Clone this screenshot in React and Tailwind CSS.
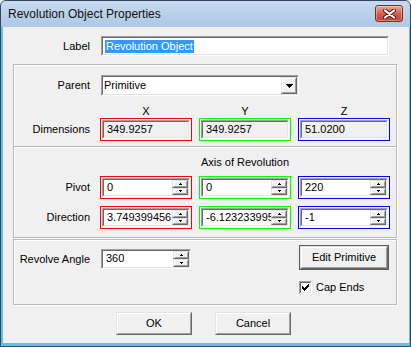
import React from "react";

const font = "font-['Liberation_Sans',Arial,sans-serif]";

function Sunken({ className = "", innerClass = "", children }) {
  return (
    <div className={"border border-t-[#a0a0a0] border-l-[#a0a0a0] border-r-white border-b-white " + className}>
      <div className={"h-full border border-t-[#696969] border-l-[#696969] border-r-[#e3e3e3] border-b-[#e3e3e3] " + innerClass}>
        {children}
      </div>
    </div>
  );
}

function Raised({ className = "", innerClass = "", children }) {
  return (
    <div className={"border border-t-[#e3e3e3] border-l-[#e3e3e3] border-r-[#696969] border-b-[#696969] bg-[#f0f0f0] " + className}>
      <div className={"h-full border border-t-white border-l-white border-r-[#a0a0a0] border-b-[#a0a0a0] " + innerClass}>
        {children}
      </div>
    </div>
  );
}

function Up() {
  return (
    <svg width="3" height="2" viewBox="0 0 3 2" shapeRendering="crispEdges">
      <rect x="1" y="0" width="1" height="1" fill="#000" />
      <rect x="0" y="1" width="3" height="1" fill="#000" />
    </svg>
  );
}
function Down() {
  return (
    <svg width="3" height="2" viewBox="0 0 3 2" shapeRendering="crispEdges">
      <rect x="0" y="0" width="3" height="1" fill="#000" />
      <rect x="1" y="1" width="1" height="1" fill="#000" />
    </svg>
  );
}

function SpinEdit({ value, className = "", w = "w-[88px]", h = "h-[19px]" }) {
  return (
    <Sunken className={w + " " + h + " bg-white " + className} innerClass="flex">
      <div className="flex-1 min-w-0 overflow-hidden whitespace-nowrap pl-[3px] text-[11px] leading-[15px] text-black">
        {value}
      </div>
      <div className="w-[16px] flex flex-col">
        <Raised className="flex-1" innerClass="flex items-center justify-center">
          <Up />
        </Raised>
        <Raised className="flex-1" innerClass="flex items-center justify-center">
          <Down />
        </Raised>
      </div>
    </Sunken>
  );
}

function Framed({ color, children }) {
  return <div className={"border p-[1px] w-[92px] h-[23px] " + color}>{children}</div>;
}

function ReadOnly({ value }) {
  return (
    <Sunken className="w-[88px] h-[19px] bg-[#f0f0f0]">
      <div className="pl-[3px] text-[11px] leading-[15px] whitespace-nowrap">{value}</div>
    </Sunken>
  );
}

function Label({ children, w = "w-[76px]" }) {
  return <div className={w + " text-right text-[11px] leading-[13px] whitespace-nowrap"}>{children}</div>;
}

const group =
  "ml-[10px] w-[384px] border border-[#b8b8b8] shadow-[inset_1px_1px_0_#ffffff,1px_1px_0_#ffffff] flex flex-col";

function Btn({ children, className = "", def = false }) {
  const inner = (
    <Raised className="w-full h-full" innerClass="flex items-center justify-center text-[11px] leading-[13px]">
      {children}
    </Raised>
  );
  if (def) {
    return <div className={"border border-[#5a5a5a] " + className}>{inner}</div>;
  }
  return <div className={className}>{inner}</div>;
}

export default function App() {
  return (
    <div className={"w-[411px] h-[347px] bg-[#f0f0f0] " + font}>
      <div className="w-[411px] h-[347px] flex flex-col border border-[#33475e] rounded-t-[6px] bg-[#6cbce8] overflow-hidden text-black">
        {/* Title bar */}
        <div className="h-[26px] flex items-start bg-linear-to-b from-[#c8daef] to-[#adc7e5]">
          <div className="ml-[7px] mt-[6px] text-[12px] leading-[14px] text-[#111] whitespace-nowrap">
            Revolution Object Properties
          </div>
          <div className="ml-auto mr-[7px] mt-[4px] w-[28px] h-[17px] rounded-[3px] border border-[#7d2a1f] bg-linear-to-b from-[#e8aa9c] via-[#d0604d] to-[#c3402f] flex items-center justify-center shadow-[inset_0_0_0_1px_rgba(255,255,255,0.35)]">
            <svg width="13" height="10" viewBox="0 0 13 10">
              <path d="M2 1.5 L11 8.5 M11 1.5 L2 8.5" stroke="#5b1a10" strokeWidth="4" strokeLinecap="round" />
              <path d="M2 1.5 L11 8.5 M11 1.5 L2 8.5" stroke="#ffffff" strokeWidth="2.2" strokeLinecap="round" />
            </svg>
          </div>
        </div>

        {/* Client */}
        <div className="flex-1 ml-[2px] mr-[1px] mb-[3px] bg-[#f0f0f0] flex flex-col">
          {/* Label row */}
          <div className="mt-[9px] flex items-center">
            <Label w="w-[87px]">Label</Label>
            <Sunken className="ml-[11px] w-[288px] h-[20px] bg-white" innerClass="flex items-center pl-[2px]">
              <span className="bg-[#3399ff] text-white text-[11px] leading-[13px] px-[1px] whitespace-nowrap">
                Revolution Object
              </span>
            </Sunken>
          </div>

          {/* Group 1 */}
          <div className={group + " mt-[8px] h-[83px] pt-[10px]"}>
            <div className="flex items-center h-[21px]">
              <Label>Parent</Label>
              <Sunken className="ml-[11px] w-[198px] h-[21px] bg-white" innerClass="flex items-center">
                <div className="flex-1 pl-[1px] text-[11px] leading-[13px]">Primitive</div>
                <Raised className="w-[16px] h-full" innerClass="flex items-center justify-center">
                  <svg width="7" height="4" viewBox="0 0 7 4" shapeRendering="crispEdges">
                    <rect x="0" y="0" width="7" height="1" fill="#000" />
                    <rect x="1" y="1" width="5" height="1" fill="#000" />
                    <rect x="2" y="2" width="3" height="1" fill="#000" />
                    <rect x="3" y="3" width="1" height="1" fill="#000" />
                  </svg>
                </Raised>
              </Sunken>
            </div>
            <div className="mt-[8px] h-[14px] flex text-[11px] leading-[14px]">
              <div className="w-[86px]" />
              <div className="w-[92px] text-center">X</div>
              <div className="w-[92px] ml-[7px] text-center">Y</div>
              <div className="w-[92px] ml-[7px] text-center">Z</div>
            </div>
            <div className="flex items-center h-[23px]">
              <Label>Dimensions</Label>
              <div className="ml-[10px] flex gap-[7px]">
                <Framed color="border-[#ff0000]"><ReadOnly value="349.9257" /></Framed>
                <Framed color="border-[#00ff00]"><ReadOnly value="349.9257" /></Framed>
                <Framed color="border-[#0000ff]"><ReadOnly value="51.0200" /></Framed>
              </div>
            </div>
          </div>

          {/* Group 2 */}
          <div className={group + " -mt-[1px] h-[92px]"}>
            <div className="mt-[8px] h-[14px] flex text-[11px] leading-[14px]">
              <div className="w-[86px]" />
              <div className="w-[92px]" />
              <div className="w-[92px] ml-[7px] text-center whitespace-nowrap">Axis of Revolution</div>
            </div>
            <div className="mt-[7px] flex items-center h-[23px]">
              <Label>Pivot</Label>
              <div className="ml-[10px] flex gap-[7px]">
                <Framed color="border-[#ff0000]"><SpinEdit value="0" /></Framed>
                <Framed color="border-[#00ff00]"><SpinEdit value="0" /></Framed>
                <Framed color="border-[#0000ff]"><SpinEdit value="220" /></Framed>
              </div>
            </div>
            <div className="mt-[7px] flex items-center h-[23px]">
              <Label>Direction</Label>
              <div className="ml-[10px] flex gap-[7px]">
                <Framed color="border-[#ff0000]"><SpinEdit value="3.749399456" /></Framed>
                <Framed color="border-[#00ff00]"><SpinEdit value="-6.123233995" /></Framed>
                <Framed color="border-[#0000ff]"><SpinEdit value="-1" /></Framed>
              </div>
            </div>
          </div>

          {/* Group 3 */}
          <div className={group + " mt-[1px] h-[66px] pt-[5px]"}>
            <div className="flex items-start">
              <div className="mt-[4px] flex items-center h-[20px]">
                <Label>Revolve Angle</Label>
                <SpinEdit value="360" className="ml-[11px]" w="w-[90px]" h="h-[20px]" />
              </div>
              <div className="ml-[108px] w-[90px] flex flex-col">
                <Btn def className="w-[90px] h-[25px]">Edit Primitive</Btn>
                <div className="mt-[11px] flex items-center h-[13px]">
                  <Sunken className="w-[13px] h-[13px] bg-white" innerClass="flex items-center justify-center">
                    <svg width="7" height="7" viewBox="0 0 7 7" shapeRendering="crispEdges">
                      <rect x="0" y="2" width="1" height="3" fill="#000" />
                      <rect x="1" y="3" width="1" height="3" fill="#000" />
                      <rect x="2" y="4" width="1" height="3" fill="#000" />
                      <rect x="3" y="3" width="1" height="3" fill="#000" />
                      <rect x="4" y="2" width="1" height="3" fill="#000" />
                      <rect x="5" y="1" width="1" height="3" fill="#000" />
                      <rect x="6" y="0" width="1" height="3" fill="#000" />
                    </svg>
                  </Sunken>
                  <div className="ml-[4px] text-[11px] leading-[13px]">Cap Ends</div>
                </div>
              </div>
            </div>
          </div>

          {/* OK / Cancel */}
          <div className="mt-[7px] flex">
            <Btn className="ml-[113px] w-[76px] h-[23px]">OK</Btn>
            <Btn className="ml-[23px] w-[76px] h-[23px]">Cancel</Btn>
          </div>
        </div>
      </div>
    </div>
  );
}
